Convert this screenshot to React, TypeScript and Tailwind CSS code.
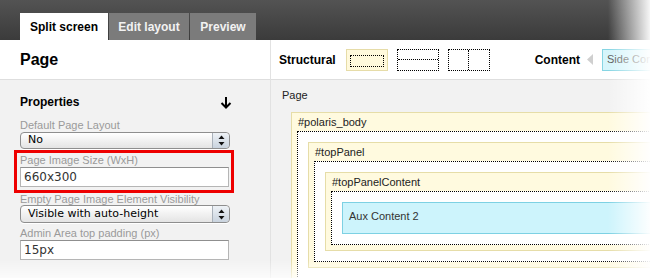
import React from "react";

const SANS = "font-['Liberation_Sans',Arial,sans-serif]";
const LUCIDA = "font-['DejaVu_Sans',sans-serif]";

function Stepper() {
  return (
    <div className="w-[17px] h-full flex items-center justify-center border-l border-[#a9b1ba] bg-gradient-to-b from-[#eef2f6] to-[#c9d3de] rounded-r-[4px]">
      <svg width="7" height="11" viewBox="0 0 7 11">
        <path d="M3.5 0.5L6.5 4H0.5z" fill="#111" />
        <path d="M3.5 10.5L6.5 7H0.5z" fill="#111" />
      </svg>
    </div>
  );
}

function Select({ value, h }: { value: string; h: string }) {
  return (
    <div className={`flex ${h} w-[210px] items-stretch rounded-[4px] border border-[#8e8e8e] bg-gradient-to-b from-white to-[#e4e4e4] shadow-[0_1px_0_#fff]`}>
      <div className={`flex-1 pl-[7px] flex items-center text-[11px] text-black ${LUCIDA}`}>{value}</div>
      <Stepper />
    </div>
  );
}

function Input({ value }: { value: string }) {
  return (
    <div className={`h-[20px] w-[209px] border border-[#b5b5b5] border-t-[#8f8f8f] bg-white pl-[3px] flex items-center text-[12px] text-[#333] ${LUCIDA}`}>
      {value}
    </div>
  );
}

function Label({ text, cls }: { text: string; cls: string }) {
  return <div className={`text-[11px] text-[#9a9a9a] ${cls}`}>{text}</div>;
}

function Region({ name, children, pb = "pb-[5px]" }: { name: string; children: React.ReactNode; pb?: string }) {
  return (
    <div className={`border border-[#e6dda8] bg-[#fffadf] px-[5px] ${pb}`}>
      <div className="leading-[18px] pl-px text-[11px] text-[#222]">{name}</div>
      <div className="border border-dotted border-black bg-white p-[10px]">{children}</div>
    </div>
  );
}

export default function App() {
  return (
    <div className={`relative w-[650px] h-[278px] overflow-hidden bg-white ${SANS}`}>
      {/* Tab bar */}
      <div className="h-[40px] flex items-end pl-[20px] bg-gradient-to-b from-[#535353] to-[#3b3b3b]">
        <div className="h-[27px] w-[88px] bg-white flex items-center justify-center text-[12px] font-bold text-black">
          Split screen
        </div>
        <div className="h-[27px] w-[80px] ml-px bg-[#7b7b7b] flex items-center justify-center text-[12px] font-bold text-[#f2f2f2]">
          Edit layout
        </div>
        <div className="h-[27px] w-[66px] ml-px bg-[#7b7b7b] flex items-center justify-center text-[12px] font-bold text-[#f2f2f2]">
          Preview
        </div>
      </div>

      <div className="flex h-[238px]">
        {/* Left panel */}
        <div className="w-[271px] shrink-0 border-r border-[#e2e2e2] bg-[#f2f2f2]">
          <div className="h-[40px] bg-white border-b border-[#dedede] flex items-center pl-[20px] text-[16px] font-bold text-black">
            Page
          </div>
          <div className="pl-[20px] pt-[14px]">
            <div className="w-[212px] flex items-center justify-between leading-[16px] text-[12px] font-bold text-black">
              Properties
              <svg width="12" height="13" viewBox="0 0 12 13">
                <path d="M6 1V11.5M1.5 7L6 11.5L10.5 7" stroke="#000" strokeWidth="2" fill="none" />
              </svg>
            </div>
            <Label text="Default Page Layout" cls="mt-[9px] leading-[13px]" />
            <Select value="No" h="h-[17px]" />
            <div className="-ml-[6px] mt-px w-[220px] border-[3px] border-[#ee0000] px-[3px] pb-[3px]">
              <Label text="Page Image Size (WxH)" cls="leading-[14px]" />
              <Input value="660x300" />
            </div>
            <Label text="Empty Page Image Element Visibility" cls="leading-[12px]" />
            <Select value="Visible with auto-height" h="h-[18px]" />
            <Label text="Admin Area top padding (px)" cls="mt-[3px] leading-[14px]" />
            <Input value="15px" />
          </div>
        </div>

        {/* Right panel */}
        <div className="flex-1 bg-[#f2f2f2]">
          <div className="h-[40px] bg-white border-b border-[#dedede] flex items-center pl-[8px]">
            <span className="text-[12px] font-bold text-black">Structural</span>
            <div className="ml-[10px] w-[42px] h-[22px] border border-[#e6dca8] bg-[#fff9dc] px-[3px] pt-[5px] pb-[3px]">
              <div className="h-full border border-dotted border-black" />
            </div>
            <div className="ml-[9px] w-[42px] h-[22px] flex flex-col border border-dotted border-black">
              <div className="flex-1 border-b border-dotted border-black" />
              <div className="flex-1" />
            </div>
            <div className="ml-[9px] w-[42px] h-[22px] flex border border-dotted border-black">
              <div className="flex-1 border-r border-dotted border-black" />
              <div className="flex-1" />
            </div>
            <span className="ml-[45px] text-[12px] font-bold text-black">Content</span>
            <svg className="ml-[7px]" width="6" height="11" viewBox="0 0 6 11">
              <path d="M6 0V11L0 5.5z" fill="#cfcfcf" />
            </svg>
            <div className="ml-[9px] h-[22px] w-[90px] border border-[#86d5e3] bg-[#d6f5fb] pl-[4px] flex items-center text-[11px] text-[#555]">
              Side Content
            </div>
          </div>
          <div className="pl-[11px] pt-[9px] leading-[13px] text-[11px] text-[#222]">Page</div>
          <div className="ml-[20px] mt-[10px] w-[420px]">
            <Region name="#polaris_body" pb="pb-[40px]">
              <Region name="#topPanel">
                <Region name="#topPanelContent">
                  <div className="h-[32px] border border-[#7dd1e3] bg-[#cdf4fc] pl-[6px] pt-[6px] leading-[14px] text-[11px] text-[#333]">
                    Aux Content 2
                  </div>
                </Region>
              </Region>
            </Region>
          </div>
        </div>
      </div>

      {/* Edge fades */}
      <div className="absolute right-0 top-0 h-full w-[42px] bg-gradient-to-r from-transparent to-white/95" />
      <div className="absolute left-0 bottom-0 w-full h-[18px] bg-gradient-to-b from-transparent to-white/70" />
    </div>
  );
}
